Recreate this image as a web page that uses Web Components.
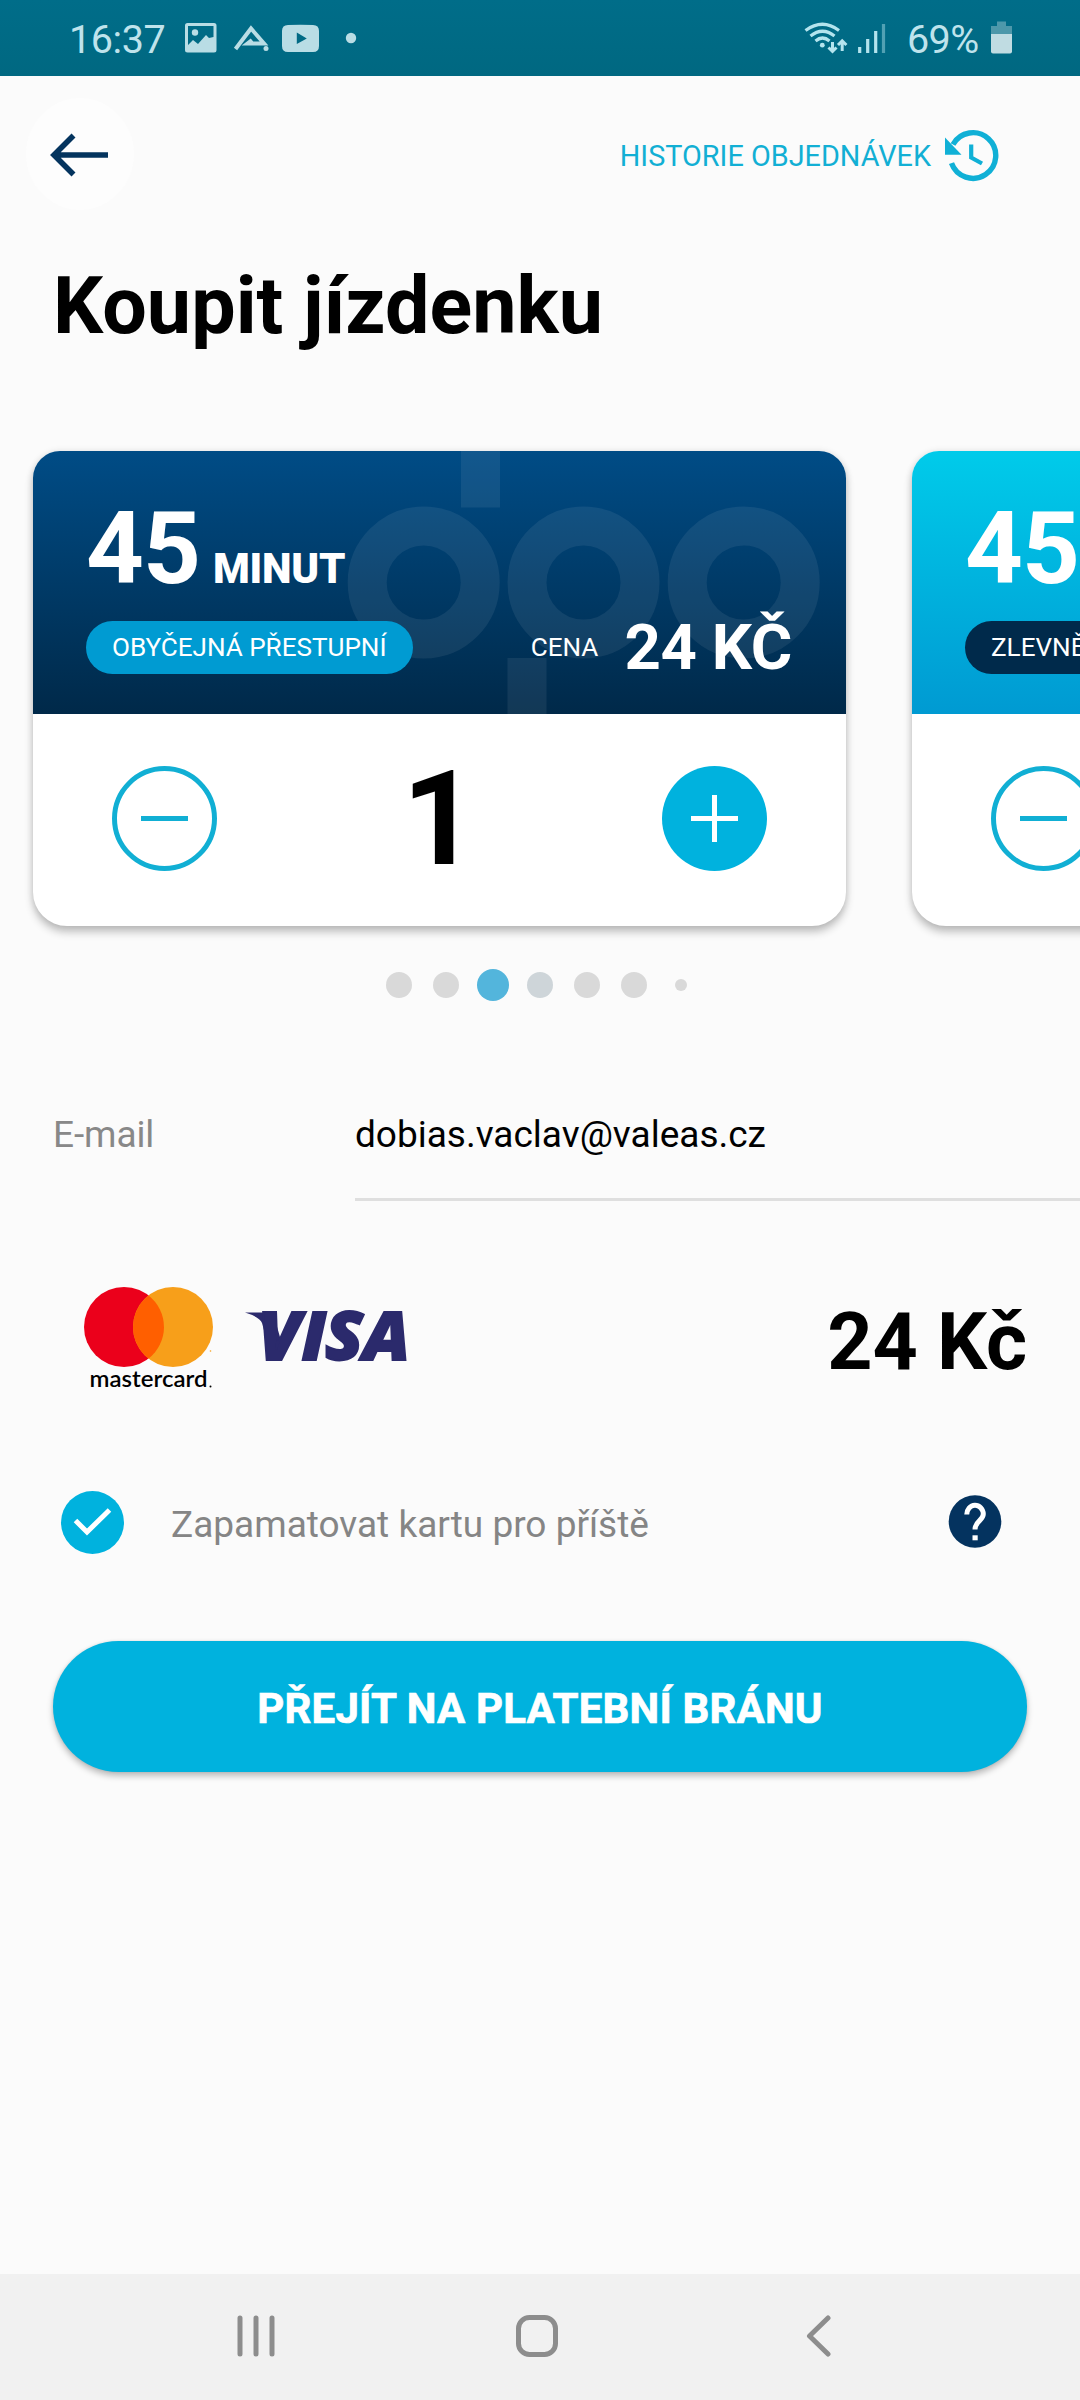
<!DOCTYPE html>
<html lang="cs">
<head>
<meta charset="utf-8">
<title>Koupit jízdenku</title>
<style>
html,body{margin:0;padding:0}
body{width:1080px;height:2400px;overflow:hidden;background:#fbfbfb;font-family:Roboto,"Liberation Sans",sans-serif;color:#000}
</style>
</head>
<body>
<ticket-app></ticket-app>
<script>
const define = (name, html) => customElements.define(name, class extends HTMLElement {
  constructor() {
    super();
    const t = document.createElement('template');
    t.innerHTML = html;
    this.attachShadow({mode: 'open'}).appendChild(t.content.cloneNode(true));
  }
});

define('status-bar', `
<style>
:host{display:flex;height:76px;box-sizing:border-box;padding:0 68px;background:linear-gradient(#006d89,#006881);color:#bfe3ec;font-size:39.5px;line-height:79px;justify-content:space-between}
div{display:flex}svg{display:block}
.l span{width:99px;padding-left:1px;letter-spacing:-.4px}.r span{width:81px;padding-left:1px;letter-spacing:-.6px}
</style>
<div class="l"><span>16:37</span>
<svg width="200" height="76" viewBox="168 0 200 76" fill="#b9dde5">
<path fill-rule="evenodd" d="M187.500 23H214q2.500 0 2.500 2.500V50q0 2.500-2.500 2.500H187.500q-2.500 0-2.500-2.500V25.500q0-2.500 2.500-2.500zM188 26V45l5-5 5 4 8-9 3 3 4.500 -1V26z"/>
<circle cx="195" cy="32.500" r="3.200"/>
<path d="M235.500 49L251 28.500L264 43.500H247.500L252 40" fill="none" stroke="#b9dde5" stroke-width="4"/>
<circle cx="266" cy="48.500" r="2.500"/>
<path fill-rule="evenodd" d="M288 25q12.500-.6 25 0q6 0 6 6v15q0 6-6 6h-25q-6 0-6-6V31q0-6 6-6zM296.800 32.500v11.500l10-5.500z"/>
<circle cx="351" cy="38" r="5.200"/></svg></div>
<div class="r"><svg width="106" height="76" viewBox="800 0 106 76" fill="none" stroke="#b4e4ee">
<path d="M805.500 30.500Q822.500 18 839 30.500M810.500 36Q822.500 26.500 834.500 36M815.500 41Q822.500 35 829.500 41" stroke-width="3.200"/>
<circle cx="822.300" cy="45.200" r="2.400" fill="#b4e4ee" stroke="none"/>
<path d="M832.500 42v9M828.500 47.500l4 4 4-4M842.200 51V41M838 45l4.200-4.200 4.200 4.200" stroke-width="3"/>
<path d="M859.700 47v6M867.700 39v14M875.700 31v22" stroke-width="3.200"/><path d="M883.500 24v29" stroke-width="3.200" opacity=".45"/>
</svg><span>69%</span><svg width="24" height="76" viewBox="988 0 24 76" fill="#c0dce2"><path d="M997 21.500h9V26h6v8h-21v-8h6z" opacity=".4"/><path d="M991 34h21v17.500q0 2-2 2h-17q-2 0-2-2z"/></svg></div>`);

define('app-toolbar', `
<style>
:host{display:flex;height:156px;align-items:center;justify-content:space-between;padding:0 81px 0 26px}
.back{width:108px;height:112px;border-radius:50%;background:#fdfdfd;display:flex;align-items:center;justify-content:center;padding-top:2px;box-sizing:border-box}
.h{display:flex;align-items:center;gap:13px;color:#12afd4;font-size:28.800px;padding-top:3px}
.h span{padding-top:0}svg{display:block}
</style>
<div class="back"><svg width="60" height="48" viewBox="50 131 60 48" fill="none" stroke="#04345e" stroke-width="5.600"><path d="M108 155H54M73.500 135.500L54 155L73.500 174.500"/></svg></div>
<div class="h"><span>HISTORIE OBJEDNÁVEK</span><svg width="55" height="54" viewBox="944 129 55 54"><g fill="none" stroke="#10b0d6" stroke-width="5.400"><path d="M951.500 163.200A22.800 22.800 0 1 0 953 144.500"/><path d="M971.200 144.500v13L982 163.500" stroke-width="4.200"/></g><path d="M945 137.500V154.800h16.500z" fill="#10b0d6"/></svg></div>`);

define('round-step', `
<style>:host{display:block;width:105px;height:105px}svg{display:block}.plus{display:none}
:host([kind=plus]) .plus{display:block}:host([kind=plus]) .minus{display:none}</style>
<svg class="minus" width="105" height="105" fill="none" stroke="#11afd4" stroke-width="5"><circle cx="52.500" cy="52.500" r="50"/><path d="M29 52.500H76"/></svg>
<svg class="plus" width="105" height="105" fill="#00b2de"><circle cx="52.500" cy="52.500" r="52.500"/><path d="M29 52.500H76M52.500 29V76" stroke="#fff" stroke-width="5"/></svg>`);

define('ticket-card', `
<style>
:host{display:block;flex:none;width:813px;height:475px;border-radius:27px 27px 34px 34px;background:#fff;overflow:hidden;box-shadow:0 6px 9px rgba(0,0,0,.24),0 0 7px rgba(0,0,0,.09);--top:#004c86;--bot:#002949;--pill:#009bd2}
:host([tone=light]){--top:#00cbea;--bot:#009ad2;--pill:#002a4b}
.head{position:relative;height:263px;box-sizing:border-box;padding:0 54px 0 53px;background:linear-gradient(var(--top),var(--bot));color:#fff;display:flex;flex-direction:column}
.mark{position:absolute;left:0;top:0}
.time{position:relative;display:flex;align-items:baseline;gap:13px;padding-top:39px;line-height:118px;font-weight:700;font-size:101px}
.time b{font-size:42px;line-height:50px;letter-spacing:-.2px}
.n{letter-spacing:-1px}
.row{position:relative;display:flex;align-items:center;height:53px;margin-top:13px}
.pill{height:53px;line-height:52px;border-radius:27px;background:var(--pill);padding:0 26px;font-size:26.100px;letter-spacing:-.02px;white-space:nowrap}
.c{font-size:26.100px;margin-left:auto;line-height:51px;padding-bottom:1px}
.p{font-size:63.500px;font-weight:700;line-height:52px;margin-left:26px;letter-spacing:-.4px}
.qty{height:209px;display:flex;align-items:center;justify-content:space-between;padding:0 79px;box-sizing:border-box}
.v{font-size:131px;font-weight:700;line-height:140px}
</style>
<div class="head">
<svg class="mark" width="813" height="263" viewBox="33 451 813 263" fill="none" stroke="#fff" stroke-opacity=".07" stroke-width="39"><circle cx="423.700" cy="582.500" r="56.500"/><circle cx="583.500" cy="582.500" r="56.500"/><circle cx="743.700" cy="582.500" r="56.500"/><path d="M480.500 451V507.500M527 658V714"/></svg>
<div class="time"><span class="n"><slot name="n"></slot></span><b>MINUT</b></div>
<div class="row"><span class="pill"><slot name="type"></slot></span><span class="c">CENA</span><span class="p"><slot name="price"></slot></span></div>
</div>
<div class="qty"><round-step></round-step><span class="v">1</span><round-step kind="plus"></round-step></div>`);

define('page-dots', `
<style>:host{display:flex;justify-content:center;height:32px;margin-top:43px}
i{width:47px;height:32px;display:flex;align-items:center;justify-content:center}
i::before{content:"";width:26px;height:26px;border-radius:50%;background:#d9d9d9}
.a::before{width:32px;height:32px;background:#53b5dc}.b::before{background:#ced5d9}.s::before{width:12px;height:12px}</style>
<i></i><i></i><i class="a"></i><i class="b"></i><i></i><i></i><i class="s"></i>`);

define('email-field', `
<style>:host{display:flex;height:131px;margin-top:69px;padding-left:53px;font-size:37px;line-height:129px}
.l{width:302px;color:#888;letter-spacing:-.1px}.v{flex:1;border-bottom:3px solid #dfdfdf;height:128px}</style>
<span class="l"><slot name="label"></slot></span><span class="v"><slot></slot></span>`);

define('payment-row', `
<style>:host{display:flex;height:140px;margin-top:70px;padding:0 53px 0 80px;justify-content:space-between}
svg{display:block}.p{font-size:79px;font-weight:700;line-height:142px;letter-spacing:-.2px}</style>
<svg width="340" height="140" viewBox="80 1271 340 140">
<circle cx="124" cy="1327" r="40" fill="#eb001b"/><circle cx="173" cy="1327" r="40" fill="#f79f1a"/>
<path d="M148.500 1295.400A40 40 0 0 1 148.500 1358.600A40 40 0 0 1 148.500 1295.400Z" fill="#ff5f00"/>
<text x="89.500" y="1387" font-family="Lato" font-weight="600" font-size="22.500" textLength="118" lengthAdjust="spacingAndGlyphs">mastercard</text>
<circle cx="210.500" cy="1386.500" r="1"/><circle cx="210.500" cy="1351" r=".8" fill="#f79f1a"/>
<g fill="#2b2a6c"><path d="M245 1312.500H268Q273 1312.500 274.500 1318L282 1344L280 1360.500L272.500 1360.500L262 1323Q260 1317 245 1312.500Z"/>
<text transform="translate(-10.400 0) scale(1.040 1)" x="258 300 322.500 359" y="1360.500" font-family="Open Sans" font-weight="800" font-style="italic" font-size="67" stroke="#2b2a6c" stroke-width="1.800">VISA</text></g>
</svg>
<span class="p"><slot></slot></span>`);

define('remember-row', `
<style>:host{display:flex;height:64px;margin-top:79px;padding:0 78px 0 60px;align-items:center}
svg{display:block}span{flex:1;padding:4px 0 0 47px;font-size:37px;color:#858585}.q{margin-top:-2px}</style>
<svg width="64" height="64" viewBox="60 1490 64 64"><circle cx="92.500" cy="1522.500" r="31.500" fill="#00b2de"/><path d="M75.500 1520.500L87 1532L109.500 1510" fill="none" stroke="#fff" stroke-width="5"/></svg>
<span><slot></slot></span>
<svg class="q" width="54" height="54" viewBox="947.500 1491 54 54"><circle cx="974.500" cy="1518.500" r="26.300" fill="#04335f"/><path d="M966.300 1511.500A8.200 9 0 0 1 982.800 1511C982.800 1517.500 974.500 1518 974.500 1526.500" fill="none" stroke="#fff" stroke-width="5"/><path d="M972 1532.300h5.200v5h-5.200z" fill="#fff"/></svg>`);

define('pay-button', `
<style>:host{display:block;margin:87px 53px 0;height:131px;border-radius:66px;background:#00b2de;color:#fff;text-align:center;font-weight:700;font-size:42px;letter-spacing:.2px;-webkit-text-stroke:.7px #fff;line-height:135px;box-shadow:0 4px 6px rgba(0,0,0,.25),0 0 3px rgba(0,0,0,.1)}</style><slot></slot>`);

define('nav-bar', `
<style>:host{display:flex;margin-top:auto;height:126px;background:#f1f1f1;align-items:center;justify-content:space-between;padding:0 248px 2px 236px;box-sizing:border-box}
svg{display:block;fill:none;stroke:#8d8d8d;stroke-width:5;stroke-linecap:round;stroke-linejoin:round}.m{margin-right:8px}</style>
<svg width="40" height="44"><path d="M4 4V40M20 4V40M36 4V40"/></svg>
<svg class="m" width="44" height="44"><rect x="3.500" y="3.500" width="37" height="37" rx="11"/></svg>
<svg width="26" height="44"><path d="M22 4L3.500 22L22 40"/></svg>`);

define('ticket-app', `
<style>
:host{display:flex;flex-direction:column;width:1080px;height:2400px;overflow:hidden;background:#fbfbfb}
h1{margin:28px 0 99px 53px;font-size:79px;line-height:92px;font-weight:700;letter-spacing:.05px;height:92px}
.cards{display:flex;gap:66px;padding-left:33px;height:475px}
</style>
<status-bar></status-bar>
<app-toolbar></app-toolbar>
<h1>Koupit jízdenku</h1>
<div class="cards">
<ticket-card><span slot="n">45</span><span slot="type">OBYČEJNÁ PŘESTUPNÍ</span><span slot="price">24 KČ</span></ticket-card>
<ticket-card tone="light"><span slot="n">45</span><span slot="type">ZLEVNĚNÁ</span><span slot="price">12 KČ</span></ticket-card>
</div>
<page-dots></page-dots>
<email-field><span slot="label">E-mail</span>dobias.vaclav@valeas.cz</email-field>
<payment-row>24 Kč</payment-row>
<remember-row>Zapamatovat kartu pro příště</remember-row>
<pay-button>PŘEJÍT NA PLATEBNÍ BRÁNU</pay-button>
<nav-bar></nav-bar>`);
</script>
</body>
</html>
